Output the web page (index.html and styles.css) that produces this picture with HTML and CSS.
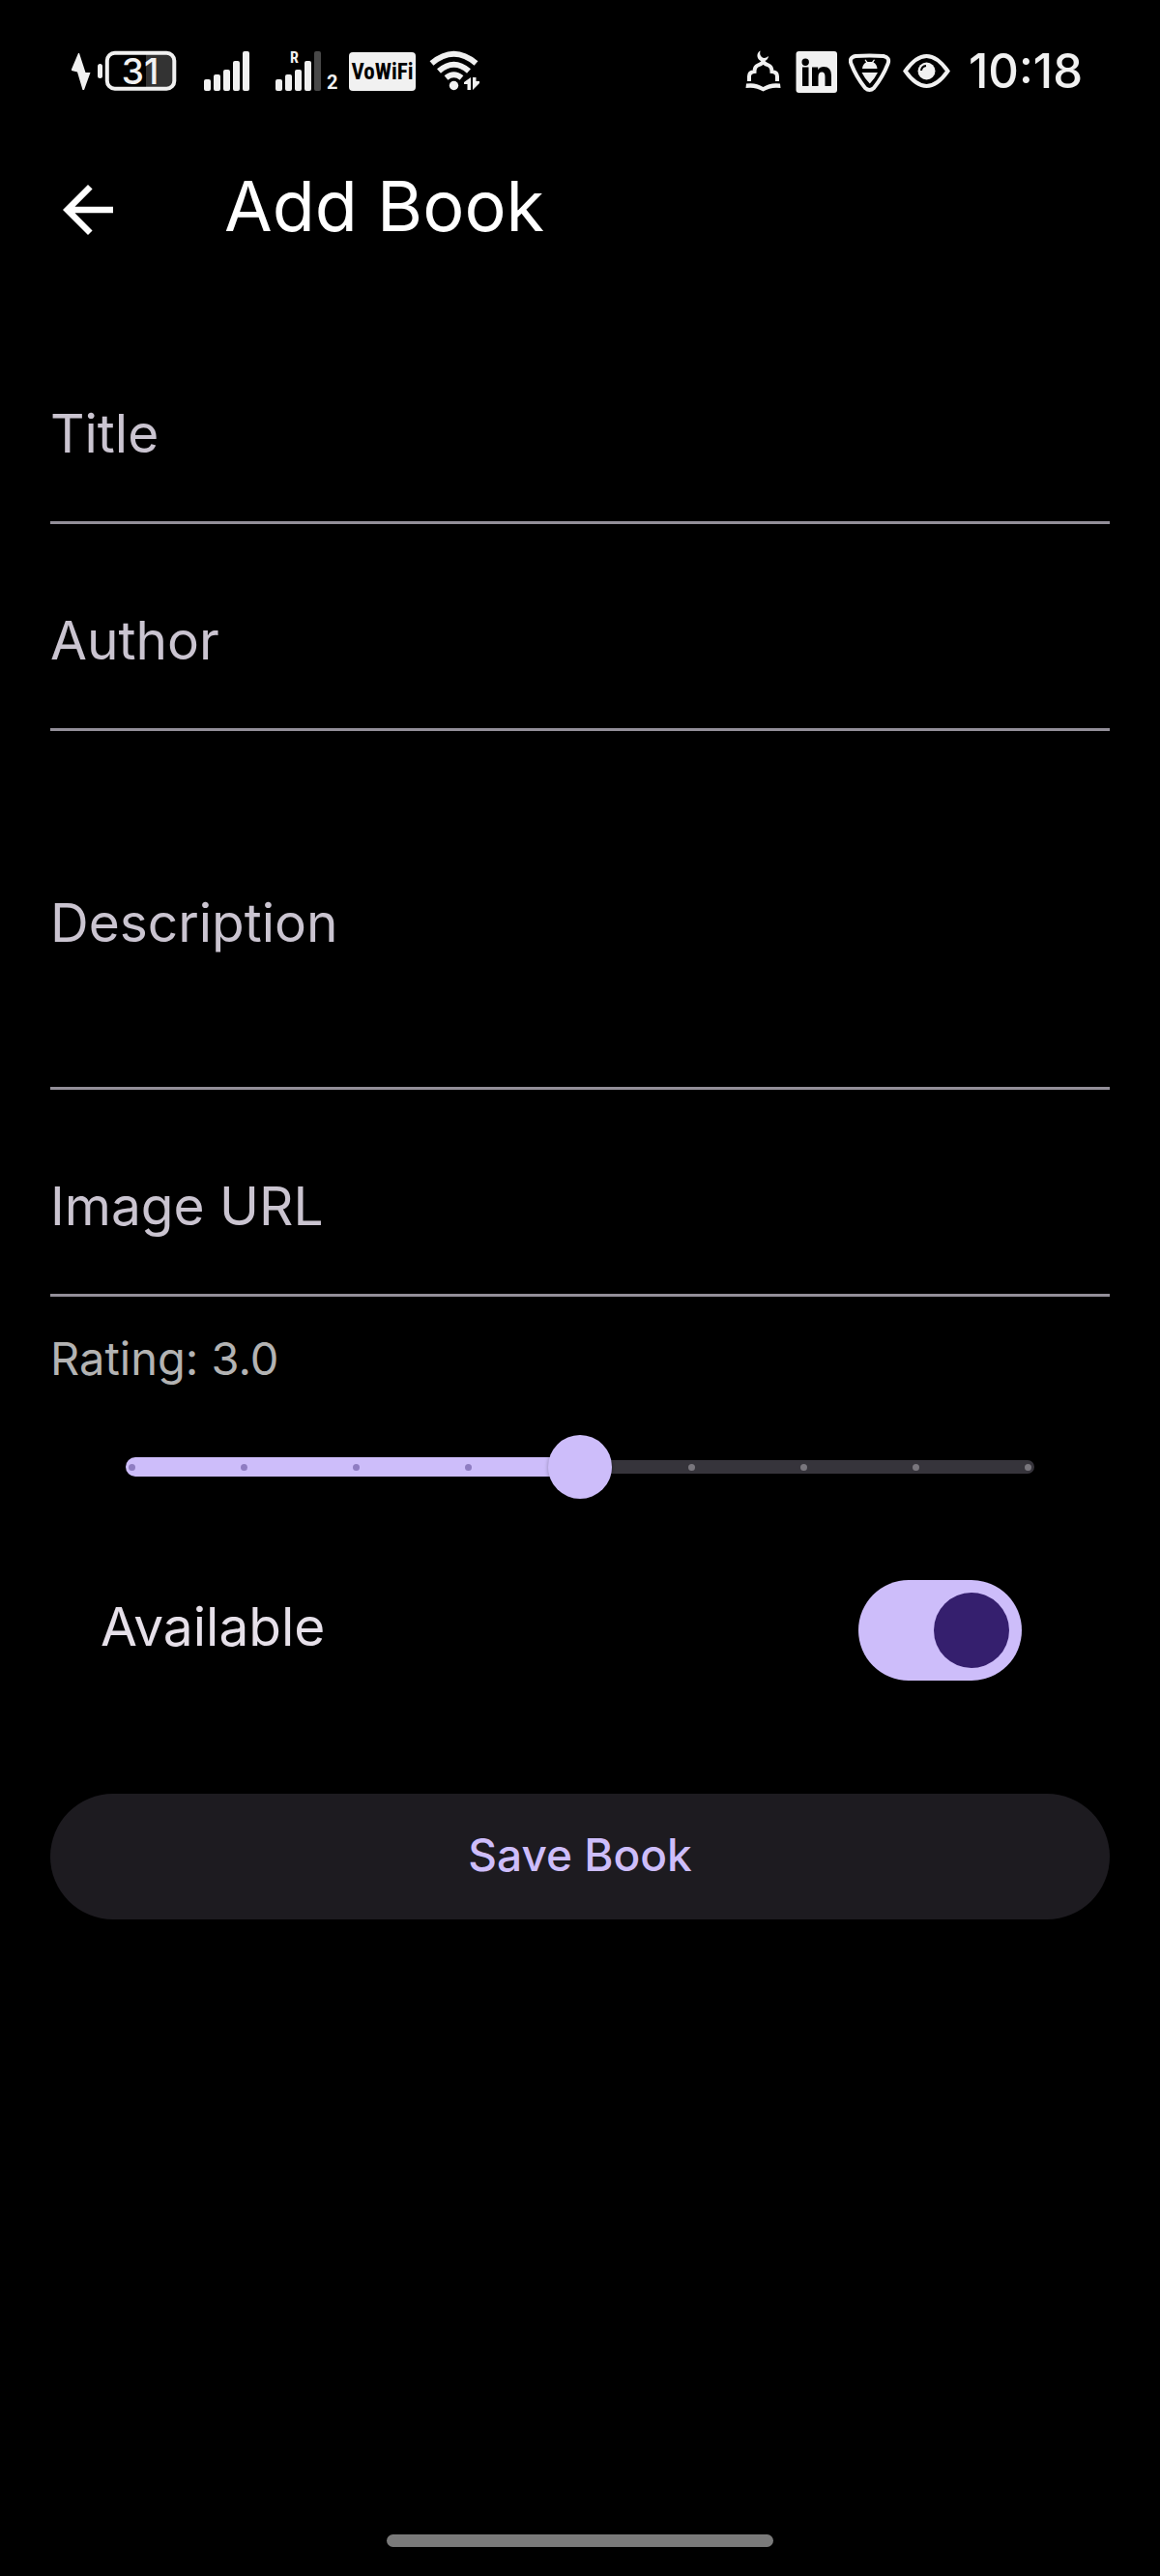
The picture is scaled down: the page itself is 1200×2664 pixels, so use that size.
FILE: index.html
```html
<!DOCTYPE html>
<html lang="en">
<head>
<meta charset="utf-8">
<meta name="viewport" content="width=device-width, initial-scale=1">
<title>Add Book</title>
<link rel="stylesheet" href="styles.css">
</head>
<body>
<div class="status-bar">
  <div class="status-group">
    <svg class="status-icon" width="125" height="48" viewBox="74 50 125 48" role="img" aria-label="Battery 31 percent, charging">
      <path d="M81 55h1l6.500 20h5L87 93h-1.500L80 74.500 74 73v-1.500z"/>
      <rect x="101" y="66" width="5" height="15" rx="2.500"/>
      <path class="dim" d="M151 55h20q9 0 9 9v19q0 9-9 9h-20z"/>
      <rect class="line" x="110.800" y="54.800" width="69.500" height="37" rx="8"/>
      <text class="battery-level" x="145" y="87">31</text>
    </svg>
    <svg class="status-icon" width="62" height="48" viewBox="211 50 62 48" role="img" aria-label="Signal">
      <rect x="211" y="82" width="7" height="12" rx="2"/><rect x="221" y="77" width="7" height="17" rx="2"/><rect x="231" y="72" width="7" height="22" rx="2"/><rect x="241" y="63" width="7" height="31" rx="2"/><rect x="251" y="53" width="7" height="41" rx="2"/>
    </svg>
    <svg class="status-icon" width="64" height="48" viewBox="285 50 64 48" role="img" aria-label="Signal, second line, roaming">
      <rect x="285" y="82" width="7" height="12" rx="2"/><rect x="295" y="77" width="7" height="17" rx="2"/><rect x="305" y="72" width="7" height="22" rx="2"/><rect x="315" y="63" width="7" height="31" rx="2"/><rect class="off" x="325" y="53" width="7" height="41" rx="2"/>
      <text class="tag" x="300" y="65">R</text>
      <text class="sim" x="338" y="92">2</text>
    </svg>
    <span class="vowifi">VoWiFi</span>
    <svg class="status-icon" width="56" height="48" viewBox="442 50 56 48" role="img" aria-label="Wi-Fi">
      <g class="arc"><path d="M446.500 65.500Q469.500 46 492.500 65.500"/><path d="M454 73.500Q469.500 60 485 73.500"/><path d="M461.500 80.500Q469.500 74 477.500 80.500"/></g>
      <circle cx="469.500" cy="88.500" r="4.700"/>
      <path d="M487 80v13h-3.500v-6H480v-2zM489 80v13l7-7v-2h-3.500v-4z"/>
    </svg>
  </div>
  <div class="status-group">
    <svg class="status-icon" width="41" height="48" viewBox="771 50 41 48" role="img" aria-label="Prayer times">
      <path d="M787.500 52.500a5.800 5.800 0 1 0 8.500 5.500q-4 3.500-7 1-2.500-2-1.500-6.500z"/>
      <path class="line" d="M776 84v-5q0-4.500 5.500-5 0-5 3.500-6.500 4-1.500 5.500-3.500 1.500 2 5.500 3.500 3.500 1.500 3.500 6.500 5.500.5 5.500 5v5"/>
      <path d="M789.700 61.500h1.600l1.700 5h-5z"/>
      <path d="M773 86.500q10-1.500 17.500 3.500 7.500-5 17.500-3.500l.5 4.500q-10-1.500-18 3.500-8-5-18-3.500z"/>
    </svg>
    <svg class="status-icon" width="43" height="48" viewBox="824 50 43 48" role="img" aria-label="LinkedIn">
      <rect x="824.500" y="53" width="42.500" height="43" rx="3"/>
      <path class="cut" d="M831 69.500h6.500V89H831zM834.200 60.500a3.700 3.700 0 1 1 0 7.400 3.700 3.700 0 0 1 0-7.400zM841 69.500h6.200v2.700q2-3.200 6-3.200 7.800 0 7.800 9V89h-6.500v-9.500q0-5-3.300-5-3.700 0-3.700 5V89H841z"/>
    </svg>
    <svg class="status-icon" width="44" height="48" viewBox="879 50 44 48" role="img" aria-label="Security">
      <path class="line" d="M886 58q14.500-1 29 0 7 1.500 4.500 8-5.500 14-14.500 25-4.500 4-9 0-9-11-14.500-25-2.500-6.500 4.500-8z"/>
      <path d="M893 71q.5-5 4-6.500L895.500 62l1-.5 2 2.500h4.500l2-2.500 1 .5-1.500 2.500q3.500 1.500 4 6.500zM892.500 75h16.500q-3.500 7-8.200 11.500Q896 82 892.500 75z"/>
    </svg>
    <svg class="status-icon" width="50" height="48" viewBox="935 50 50 48" role="img" aria-label="Eye comfort">
      <path class="line" d="M937.500 73.500q22-31 44 0-22 31-44 0z"/>
      <circle cx="959.500" cy="73.500" r="9"/>
      <path class="glint" d="M954 73q.5-4.500 5-5"/>
    </svg>
    <time class="clock">10:18</time>
  </div>
</div>

<header class="app-bar">
  <a class="back" href="#" aria-label="Back">
    <svg width="78" height="78" viewBox="0 0 24 24" aria-hidden="true"><path d="M20 11H7.830l5.590-5.590L12 4l-8 8 8 8 1.410-1.410L7.830 13H20z"/></svg>
  </a>
  <h1>Add Book</h1>
</header>

<main>
  <form class="book-form">
    <div class="field"><label for="title">Title</label><input id="title" type="text"></div>
    <div class="field"><label for="author">Author</label><input id="author" type="text"></div>
    <div class="field tall"><label for="description">Description</label><textarea id="description"></textarea></div>
    <div class="field"><label for="image">Image URL</label><input id="image" type="url"></div>

    <label class="rating-label" for="rating">Rating: 3.0</label>
    <div class="slider">
      <div class="track"><span class="active"></span><span class="rest"></span></div>
      <div class="ticks"><i></i><i></i><i></i><i></i><i></i><i></i><i></i><i></i><i></i></div>
      <input id="rating" type="range" min="1" max="5" step="0.5" value="3">
    </div>

    <div class="switch-row">
      <label for="available">Available</label>
      <input class="switch" id="available" type="checkbox" role="switch" checked>
    </div>

    <button class="save" type="submit">Save Book</button>
  </form>
</main>

<div class="home-bar"><span></span></div>
</body>
</html>
```
FILE: styles.css
```css
* {
  box-sizing: border-box;
}

body {
  margin: 0;
  min-height: 100vh;
  display: flex;
  flex-direction: column;
  background: #000;
  color: #e6e0e9;
  font-family: Inter, "Noto Sans", sans-serif;
}

/* Status bar */
.status-bar {
  display: flex;
  justify-content: space-between;
  align-items: center;
  height: 148px;
  padding: 0 80px 0 74px;
}

.status-group {
  display: flex;
  align-items: center;
  gap: 12px;
}

.status-icon {
  display: block;
  fill: #f1f1f1;
}

.status-icon .line {
  fill: none;
  stroke: #f1f1f1;
  stroke-width: 4;
}

.status-icon .arc {
  fill: none;
  stroke: #f1f1f1;
  stroke-width: 6;
}

.status-icon .dim {
  fill: #333;
}

.status-icon .off {
  fill: #484848;
}

.status-icon .cut {
  fill: #000;
}

.status-icon .glint {
  fill: none;
  stroke: #000;
  stroke-width: 2;
}

.battery-level {
  font-size: 37px;
  font-weight: 500;
  text-anchor: middle;
}

.tag {
  font: 700 16px "Roboto Condensed", Roboto, sans-serif;
}

.sim {
  font: 700 20px Roboto, sans-serif;
}

.vowifi {
  display: flex;
  align-items: center;
  justify-content: center;
  width: 69px;
  height: 40px;
  border-radius: 4px;
  background: #f1f1f1;
  color: #000;
  font: 700 23px "Liberation Sans Narrow", "Roboto Condensed", Roboto, sans-serif;
}

.clock {
  width: 124px;
  color: #f1f1f1;
  font-size: 49px;
  line-height: 48px;
  font-weight: 500;
  text-align: right;
}

/* App bar */
.app-bar {
  display: flex;
  align-items: flex-start;
  gap: 102px;
  padding: 30px 52px 72px;
}

.back svg {
  display: block;
  fill: #fff;
}

h1 {
  margin: 0;
  color: #fff;
  font-size: 72px;
  line-height: 70px;
  font-weight: 400;
}

/* Form */
.book-form {
  display: flex;
  flex-direction: column;
  padding: 0 52px;
}

.field {
  display: grid;
  min-height: 214px;
  border-bottom: 3px solid #938f99;
  color: #cac4d0;
  font-size: 55px;
  line-height: 60px;
}

.field label,
.field input,
.field textarea {
  grid-area: 1 / 1;
}

.field label {
  padding-top: 90px;
}

.field.tall {
  min-height: 371px;
}

.field.tall label {
  padding-top: 168px;
}

.field input,
.field textarea {
  width: 100%;
  border: 0;
  padding: 90px 0 60px;
  background: transparent;
  color: #e6e0e9;
  font: inherit;
  outline: none;
  resize: none;
}

.rating-label {
  margin-top: 36px;
  color: #b3b3b3;
  font-size: 47px;
  line-height: 56px;
}

.slider {
  display: grid;
  align-items: center;
  margin-top: 51px;
  padding: 0 52px;
}

.slider > * {
  grid-area: 1 / 1;
}

.track {
  display: flex;
  align-items: center;
  padding: 0 26px;
}

.track span {
  flex: 1;
}

.active {
  height: 20px;
  border-radius: 10px 0 0 10px;
  background: #cdbdfa;
}

.rest {
  height: 14px;
  border-radius: 0 7px 7px 0;
  background: #36343b;
}

.ticks {
  display: flex;
  justify-content: space-between;
  padding: 0 29px;
}

.ticks i {
  width: 7px;
  height: 7px;
  border-radius: 50%;
  background: #8f7dc2;
}

.ticks i:nth-child(n + 6) {
  background: #79767d;
}

.slider input {
  appearance: none;
  width: 100%;
  height: 66px;
  margin: 0;
  background: transparent;
}

.slider input::-webkit-slider-thumb {
  appearance: none;
  width: 66px;
  height: 66px;
  border-radius: 50%;
  background: #cdbdfa;
  box-shadow: 0 1px 4px rgba(0, 0, 0, 0.3);
}

.switch-row {
  display: flex;
  justify-content: space-between;
  align-items: flex-start;
  margin-top: 84px;
  padding: 0 91px 0 52px;
  font-size: 55px;
  line-height: 96px;
}

.switch {
  appearance: none;
  display: flex;
  justify-content: flex-end;
  width: 169px;
  height: 104px;
  margin: 0;
  padding: 13px;
  border-radius: 52px;
  background: #cdbdfa;
}

.switch::before {
  content: "";
  width: 78px;
  height: 78px;
  border-radius: 50%;
  background: #351f6e;
}

.switch:not(:checked) {
  justify-content: flex-start;
}

.save {
  height: 130px;
  margin-top: 117px;
  padding: 0 0 4px;
  border: 0;
  border-radius: 65px;
  background: #1d1b20;
  color: #cdbdfa;
  font: 500 46px Inter, "Noto Sans", sans-serif;
}

/* Gesture navigation */
.home-bar {
  display: flex;
  justify-content: center;
  margin-top: auto;
  padding: 40px 0 30px;
}

.home-bar span {
  width: 400px;
  height: 13px;
  border-radius: 7px;
  background: #7a7a7a;
}
```
